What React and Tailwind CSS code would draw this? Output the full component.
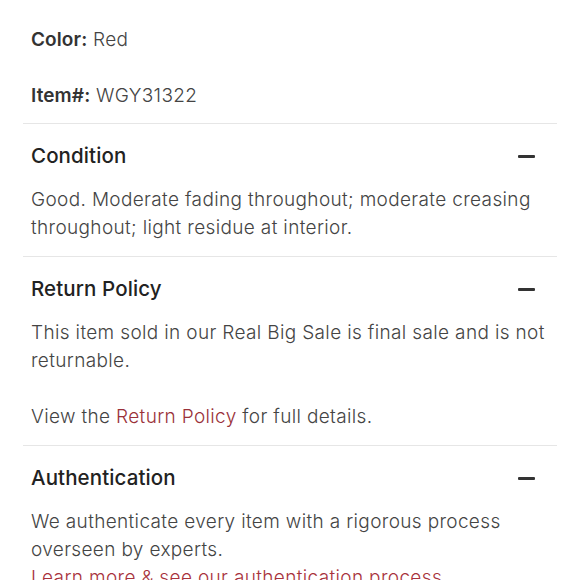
const sections = [
  {
    title: "Condition",
    body: (
      <p>Good. Moderate fading throughout; moderate creasing throughout; light residue at interior.</p>
    ),
  },
  {
    title: "Return Policy",
    body: (
      <>
        <p>This item sold in our Real Big Sale is final sale and is not returnable.</p>
        <p className="mt-7">
          View the <a className="text-[#9a3139]">Return Policy</a> for full details.
        </p>
      </>
    ),
  },
  {
    title: "Authentication",
    body: (
      <>
        <p>We authenticate every item with a rigorous process overseen by experts.</p>
        <p className="text-[#a8323c]">Learn more &amp; see our authentication process</p>
      </>
    ),
  },
];

const Section = ({ title, children, last }) => (
  <div className={`border-t border-[#e6e6e6] px-2 pt-[18px] ${last ? "" : "pb-[14px]"}`}>
    <div className="flex items-center justify-between pr-[14px]">
      <h3 className="text-[20.5px] leading-7 font-medium tracking-[0.1px] text-[#222]">{title}</h3>
      <span className="block w-[17px] h-[3px] bg-[#333] rounded-[1px]" />
    </div>
    <div className="mt-4 text-[#444]">{children}</div>
  </div>
);

export default function App() {
  return (
    <div
      className="w-[580px] h-[580px] overflow-hidden bg-white px-[23px] pt-[26px] text-[19px] leading-7 font-light tracking-[0.35px] text-[#444]"
      style={{ fontFamily: "Inter, 'Noto Sans', sans-serif" }}
    >
      {/* Item details */}
      <div className="px-2 pb-[13px]">
        <p>
          <span className="font-semibold tracking-[0.1px] text-[#333]">Color:</span> Red
        </p>
        <p className="mt-7">
          <span className="font-semibold tracking-[0.1px] text-[#333]">Item#:</span> WGY31322
        </p>
      </div>

      {sections.map((s, i) => (
        <Section key={s.title} title={s.title} last={i === sections.length - 1}>
          {s.body}
        </Section>
      ))}
    </div>
  );
}
